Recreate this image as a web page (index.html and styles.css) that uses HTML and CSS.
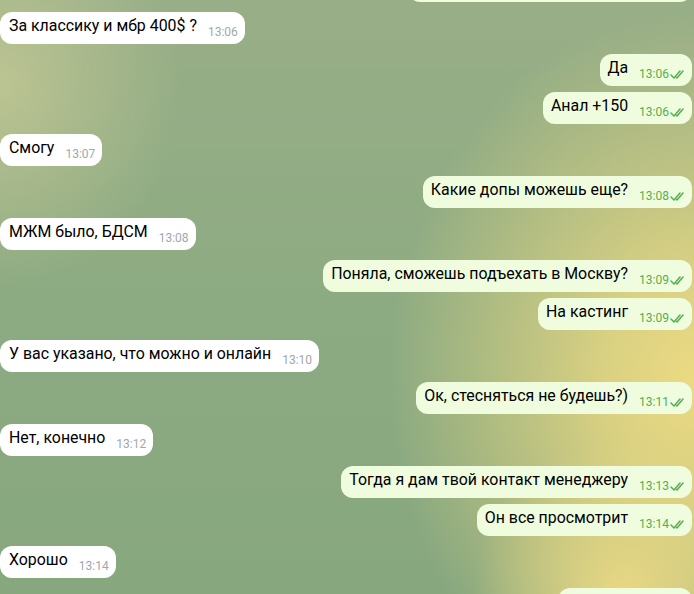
FILE: index.html
```html
<!DOCTYPE html>
<html lang="ru">
<head>
    <meta charset="UTF-8">
    <meta name="viewport" content="width=device-width, initial-scale=1.0">
    <title>Chat</title>
    <link rel="stylesheet" href="styles.css">
</head>
<body>
    <div class="chat">
        <div class="msg out cut-top"></div>

        <div class="msg in">
            <span class="text">За классику и мбр 400$ ?</span>
            <span class="time">13:06</span>
        </div>
        <div class="msg out">
            <span class="text">Да</span>
            <span class="time">13:06 <svg class="check" viewBox="0 0 16 11"><path d="M1 6l3 3 6-7M6.5 8.5l.5.5 6-7"/></svg></span>
        </div>
        <div class="msg out">
            <span class="text">Анал +150</span>
            <span class="time">13:06 <svg class="check" viewBox="0 0 16 11"><path d="M1 6l3 3 6-7M6.5 8.5l.5.5 6-7"/></svg></span>
        </div>
        <div class="msg in">
            <span class="text">Смогу</span>
            <span class="time">13:07</span>
        </div>
        <div class="msg out">
            <span class="text">Какие допы можешь еще?</span>
            <span class="time">13:08 <svg class="check" viewBox="0 0 16 11"><path d="M1 6l3 3 6-7M6.5 8.5l.5.5 6-7"/></svg></span>
        </div>
        <div class="msg in">
            <span class="text">МЖМ было, БДСМ</span>
            <span class="time">13:08</span>
        </div>
        <div class="msg out">
            <span class="text">Поняла, сможешь подъехать в Москву?</span>
            <span class="time">13:09 <svg class="check" viewBox="0 0 16 11"><path d="M1 6l3 3 6-7M6.5 8.5l.5.5 6-7"/></svg></span>
        </div>
        <div class="msg out">
            <span class="text">На кастинг</span>
            <span class="time">13:09 <svg class="check" viewBox="0 0 16 11"><path d="M1 6l3 3 6-7M6.5 8.5l.5.5 6-7"/></svg></span>
        </div>
        <div class="msg in">
            <span class="text">У вас указано, что можно и онлайн</span>
            <span class="time">13:10</span>
        </div>
        <div class="msg out">
            <span class="text">Ок, стесняться не будешь?)</span>
            <span class="time">13:11 <svg class="check" viewBox="0 0 16 11"><path d="M1 6l3 3 6-7M6.5 8.5l.5.5 6-7"/></svg></span>
        </div>
        <div class="msg in">
            <span class="text">Нет, конечно</span>
            <span class="time">13:12</span>
        </div>
        <div class="msg out">
            <span class="text">Тогда я дам твой контакт менеджеру</span>
            <span class="time">13:13 <svg class="check" viewBox="0 0 16 11"><path d="M1 6l3 3 6-7M6.5 8.5l.5.5 6-7"/></svg></span>
        </div>
        <div class="msg out">
            <span class="text">Он все просмотрит</span>
            <span class="time">13:14 <svg class="check" viewBox="0 0 16 11"><path d="M1 6l3 3 6-7M6.5 8.5l.5.5 6-7"/></svg></span>
        </div>
        <div class="msg in">
            <span class="text">Хорошо</span>
            <span class="time">13:14</span>
        </div>

        <div class="msg out cut-bottom"></div>
    </div>
</body>
</html>
```

FILE: styles.css
```css
* {
    margin: 0;
    padding: 0;
    box-sizing: border-box;
}

html, body {
    height: 100%;
    overflow: hidden;
}

body {
    font-family: Roboto, "Liberation Sans", sans-serif;
    background:
        radial-gradient(ellipse 44% 62% at 100% 64%, #ecda82 0%, rgba(236, 218, 130, 0.8) 30%, rgba(236, 218, 130, 0) 100%),
        radial-gradient(ellipse 22% 26% at 90% 100%, #e6d684 0%, rgba(230, 214, 132, 0) 100%),
        radial-gradient(ellipse 26% 34% at 0% 14%, #bcc492 0%, rgba(188, 196, 146, 0) 100%),
        linear-gradient(180deg, #98ae87 0%, #8dab82 50%, #87a77f 100%);
}

.chat {
    display: flex;
    flex-direction: column;
    padding: 0 2px 0 1px;
    margin-top: -30px;
}

.msg {
    display: flex;
    align-items: flex-end;
    height: 32px;
    padding: 4px 7px 5px 9px;
    border-radius: 12px;
    margin-top: 10px;
    white-space: nowrap;
}

.msg:first-child {
    margin-top: 0;
}

.in + .in,
.out + .out {
    margin-top: 6px;
}

.in {
    align-self: flex-start;
    background: #ffffff;
    margin-left: -1px;
}

.out {
    align-self: flex-end;
    background: #effdde;
    padding-left: 8px;
    padding-right: 6px;
}

.cut-top {
    width: 284px;
}

.cut-bottom {
    width: 134px;
}

.text {
    font-size: 15.9px;
    line-height: 20px;
    margin-bottom: 3px;
    color: #000000;
}

.time {
    display: flex;
    align-items: center;
    margin-left: 11px;
    font-size: 12px;
    line-height: 14px;
    color: #a1a8ad;
}

.out .time {
    color: #56ad52;
}

.check {
    width: 16px;
    height: 11px;
    margin-left: 1px;
    fill: none;
    stroke: #56ad52;
    stroke-width: 1.5;
    stroke-linecap: round;
    stroke-linejoin: round;
}
```
